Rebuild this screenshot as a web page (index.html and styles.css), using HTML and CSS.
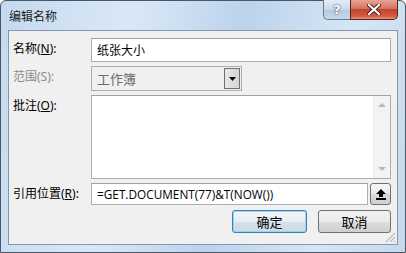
FILE: index.html
```html
<!DOCTYPE html>
<html lang="zh-CN">
<head>
    <meta charset="UTF-8">
    <title>编辑名称</title>
    <link rel="stylesheet" href="styles.css">
</head>
<body>
<div class="window">
    <header class="titlebar">
        <span class="title">编辑名称</span>
        <div class="caption">
            <span class="cap-btn help">?</span>
            <span class="cap-btn close">
                <svg width="14" height="11" viewBox="0 0 14 11">
                    <path d="M2 1 L12 10 M12 1 L2 10" stroke="#4a1a10" stroke-width="4" stroke-linecap="square"/>
                    <path d="M2 1 L12 10 M12 1 L2 10" stroke="#fff" stroke-width="2.2" stroke-linecap="square"/>
                </svg>
            </span>
        </div>
    </header>

    <div class="client">
        <div class="form">
            <label class="lbl row-name">名称(<u>N</u>):</label>
            <div class="field input row-name">纸张大小</div>

            <label class="lbl row-scope disabled">范围(S):</label>
            <div class="row-scope">
                <div class="combo">
                    <span class="combo-text">工作簿</span>
                    <span class="combo-btn">
                        <svg width="7" height="4" viewBox="0 0 7 4"><path d="M0 0 H7 L3.5 4 Z" fill="#000"/></svg>
                    </span>
                </div>
            </div>

            <label class="lbl row-note">批注(<u>O</u>):</label>
            <div class="field note row-note">
                <div class="scroll">
                    <svg width="8" height="5" viewBox="0 0 8 5"><path d="M0 5 L4 1 L8 5 Z" fill="#b8b8b8"/></svg>
                    <svg width="8" height="5" viewBox="0 0 8 5"><path d="M0 0 L4 4 L8 0 Z" fill="#b8b8b8"/></svg>
                </div>
            </div>

            <label class="lbl row-ref">引用位置(<u>R</u>):</label>
            <div class="row-ref ref">
                <div class="field input formula">=GET.DOCUMENT(77)&amp;T(NOW())</div>
                <span class="collapse">
                    <svg width="10" height="11" viewBox="0 0 10 11">
                        <path d="M5 0 L10 5 H7 V8 H3 V5 H0 Z" fill="#000"/>
                        <rect x="0" y="9" width="10" height="2" fill="#000"/>
                    </svg>
                </span>
            </div>
        </div>

        <div class="actions">
            <button class="btn default">确定</button>
            <button class="btn">取消</button>
        </div>

        <svg class="grip" width="11" height="11" viewBox="0 0 11 11">
            <path d="M10 1 L1 10 M10 5 L5 10 M10 9 L9 10" stroke="#b8bcc2" stroke-width="1.2"/>
        </svg>
    </div>
</div>
</body>
</html>
```

FILE: styles.css
```css
* {
    box-sizing: border-box;
    margin: 0;
    padding: 0;
}
body {
    font-family: "Noto Sans", "Noto Sans CJK SC", sans-serif;
    font-size: 12px;
    color: #000;
    background: #fff;
}

.window {
    width: 406px;
    height: 253px;
    border: 1px solid #4b5765;
    border-radius: 6px 6px 0 0;
    background: linear-gradient(100deg, #c5daef 0%, #d9e8f7 30%, #bcd3ec 55%, #d6e6f6 80%, #c4d9ee 100%);
    display: flex;
    flex-direction: column;
    position: relative;
}

.titlebar {
    height: 29px;
    display: flex;
    justify-content: space-between;
    align-items: flex-start;
    padding: 0 7px 0 7px;
}
.title {
    font-family: "Noto Sans CJK SC", sans-serif;
    font-size: 12px;
    line-height: 14px;
    padding: 8px 0 0 1px;
    color: #1e1e1e;
}
.caption {
    display: flex;
    margin-top: -1px;
}
.cap-btn {
    height: 20px;
    display: flex;
    align-items: center;
    justify-content: center;
    border: 1px solid #6b7a8c;
    border-top: none;
}
.help {
    width: 27px;
    border-right: none;
    border-radius: 0 0 0 5px;
    background: linear-gradient(#e4edf7, #c9d8e9 50%, #b5c8dd 51%, #c8d9eb);
    color: #fff;
    font-family: "DejaVu Sans", sans-serif;
    font-weight: bold;
    font-size: 13px;
    text-shadow: 0 0 2px #3e556e, 0 0 1px #3e556e;
}
.close {
    width: 48px;
    border-color: #5e2418;
    border-radius: 0 0 5px 0;
    background: linear-gradient(#e8a395, #d5735f 45%, #c3452c 50%, #d35b3f 85%, #e29a7e);
}

.client {
    height: 215px;
    margin: 0 7px;
    border: 1px solid #8497ad;
    background: #f0f0f0;
    padding: 7px 6px 0 4px;
    position: relative;
}

.form {
    display: grid;
    grid-template-columns: 78px 1fr;
    grid-template-rows: 24px 25px 84px 22px;
    row-gap: 4px;
}
.lbl {
    font-size: 12px;
    line-height: 14px;
    padding-top: 4px;
}
.lbl u {
    text-decoration-thickness: 1px;
    text-underline-offset: 1px;
}
.lbl.disabled {
    color: #8d8d8d;
}

.field {
    background: #fff;
    border: 1px solid #abadb3;
    border-top-color: #9ea2ab;
}
.input {
    padding: 3px 0 0 5px;
    line-height: 16px;
    font-family: "Noto Sans CJK SC", sans-serif;
}

.combo {
    width: 151px;
    height: 25px;
    border: 1px solid #adadad;
    background: #f0f0f0;
    display: flex;
    align-items: center;
    justify-content: space-between;
    padding: 0 1px 0 5px;
}
.combo-text {
    color: #6d6d6d;
    font-family: "Noto Sans CJK SC", sans-serif;
    font-size: 13px;
}
.combo-btn {
    width: 16px;
    height: 21px;
    border: 1px solid #707070;
    background: linear-gradient(90deg, #e8e8e8, #d4d4d4);
    display: flex;
    align-items: center;
    justify-content: center;
}

.note {
    display: flex;
    justify-content: flex-end;
}
.scroll {
    width: 17px;
    background: #f3f3f3;
    border-left: 1px solid #e8e8e8;
    display: flex;
    flex-direction: column;
    justify-content: space-between;
    align-items: center;
    padding: 6px 0 6px;
}

.ref {
    display: flex;
    gap: 2px;
}
.formula {
    flex: 1;
    font-family: "Open Sans", sans-serif;
    font-size: 11.8px;
    padding-top: 2px;
}
.collapse {
    width: 21px;
    height: 22px;
    border: 1px solid #707070;
    border-radius: 3px;
    background: linear-gradient(#f7f7f7, #e8e8e8 50%, #dadada 51%, #d0d0d0);
    display: flex;
    align-items: center;
    justify-content: center;
}

.actions {
    display: flex;
    justify-content: flex-end;
    gap: 11px;
    margin-top: 5px;
}
.btn {
    width: 73px;
    height: 23px;
    border: 1px solid #707070;
    border-radius: 3px;
    background: linear-gradient(#f2f2f2, #ebebeb 50%, #dddddd 51%, #cfcfcf);
    font-family: "Noto Sans CJK SC", sans-serif;
    font-size: 13px;
    color: #000;
}
.btn.default {
    width: 75px;
    border-color: #3c7fb1;
    box-shadow: inset 0 0 0 1px #9cd3f2;
    background: linear-gradient(#f0f5f8, #e6eef3 50%, #d6e2ea 51%, #cbd9e3);
}

.grip {
    position: absolute;
    right: 1px;
    bottom: 1px;
}
```
